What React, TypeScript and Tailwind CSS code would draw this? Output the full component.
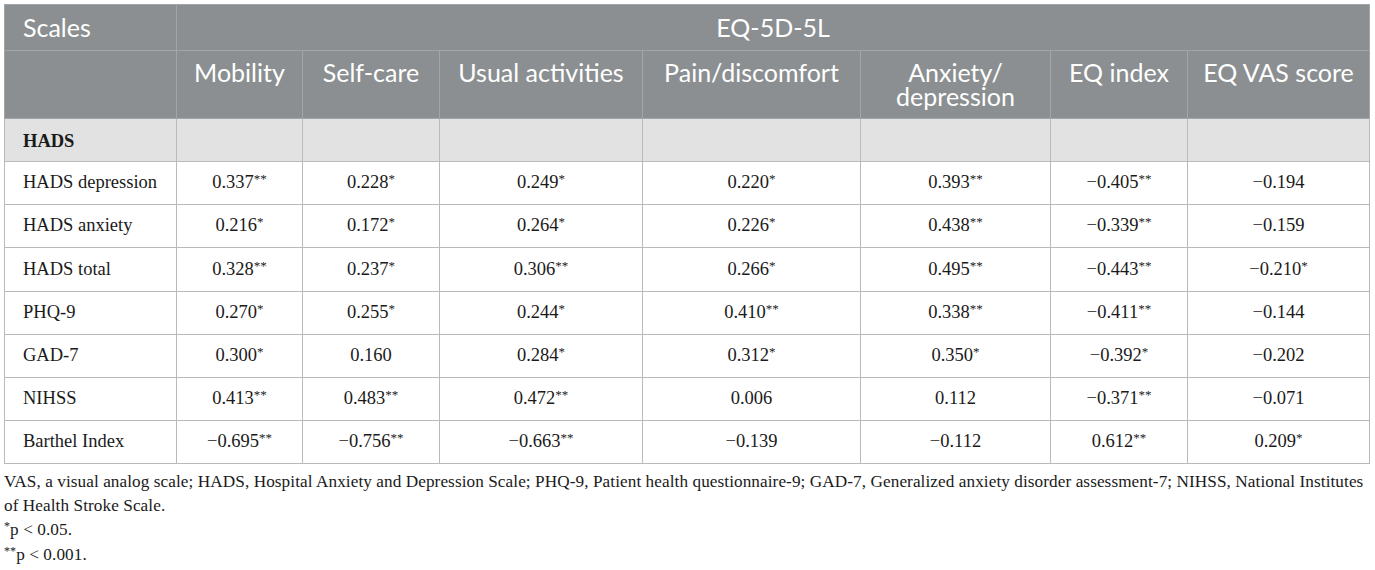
import React from 'react';

type Row = { label: string; values: string[] };

const rows: Row[] = [
  { label: 'HADS depression', values: ['0.337**', '0.228*', '0.249*', '0.220*', '0.393**', '−0.405**', '−0.194'] },
  { label: 'HADS anxiety', values: ['0.216*', '0.172*', '0.264*', '0.226*', '0.438**', '−0.339**', '−0.159'] },
  { label: 'HADS total', values: ['0.328**', '0.237*', '0.306**', '0.266*', '0.495**', '−0.443**', '−0.210*'] },
  { label: 'PHQ-9', values: ['0.270*', '0.255*', '0.244*', '0.410**', '0.338**', '−0.411**', '−0.144'] },
  { label: 'GAD-7', values: ['0.300*', '0.160', '0.284*', '0.312*', '0.350*', '−0.392*', '−0.202'] },
  { label: 'NIHSS', values: ['0.413**', '0.483**', '0.472**', '0.006', '0.112', '−0.371**', '−0.071'] },
  { label: 'Barthel Index', values: ['−0.695**', '−0.756**', '−0.663**', '−0.139', '−0.112', '0.612**', '0.209*'] },
];

const columns = ['Mobility', 'Self-care', 'Usual activities', 'Pain/discomfort', 'Anxiety/ depression', 'EQ index', 'EQ VAS score'];
const widths = [172, 126, 137, 203, 218, 190, 137, 182];

const sans = { fontFamily: 'Lato, "Liberation Sans", sans-serif' };
const serif = { fontFamily: '"Liberation Serif", serif' };

// split "0.337**" into number + raised stars
const Value: React.FC<{ v: string }> = ({ v }) => {
  const m = v.match(/^([^*]*)(\**)$/);
  const num = m ? m[1] : v;
  const stars = m ? m[2] : '';
  return (
    <>
      {num}
      {stars && <span className="relative -top-[5px] text-[13px]">{stars}</span>}
    </>
  );
};

const App: React.FC = () => {
  return (
    <div className="bg-white w-[1375px] h-[570px] pl-1 pt-1" style={serif}>
      <table className="border-collapse table-fixed w-[1366px] border border-[#b4b6b6]">
        <colgroup>
          {widths.map((w, i) => (
            <col key={i} style={{ width: w }} />
          ))}
        </colgroup>
        <thead style={sans} className="text-white text-[25px] font-normal">
          <tr className="h-[46px] bg-[#8b8f91]">
            <th className="text-left font-normal pl-[18px] border border-[#a3a6a7] align-middle">Scales</th>
            <th colSpan={7} className="font-normal border border-[#a3a6a7] align-middle">EQ-5D-5L</th>
          </tr>
          <tr className="h-[68px] bg-[#8b8f91]">
            <th className="border border-[#a3a6a7]"></th>
            {columns.map((c) => (
              <th key={c} className="font-normal border border-[#a3a6a7] align-top pt-[9px] leading-[24px] px-2">
                {c}
              </th>
            ))}
          </tr>
        </thead>
        <tbody className="text-[18.5px] text-[#1a1a1a]">
          <tr className="h-[43px] bg-[#e1e2e1]">
            <td className="font-bold pl-[18px] pt-[3px] border border-[#b9bbbb]">HADS</td>
            {columns.map((c) => (
              <td key={c} className="border border-[#b9bbbb]"></td>
            ))}
          </tr>
          {rows.map((r) => (
            <tr key={r.label} className="h-[43.2px]">
              <td className="pl-[18px] border border-[#b9bbbb]">{r.label}</td>
              {r.values.map((v, i) => (
                <td key={i} className="text-center border border-[#b9bbbb]">
                  <Value v={v} />
                </td>
              ))}
            </tr>
          ))}
        </tbody>
      </table>
      <div className="text-[17.2px] text-[#1a1a1a] w-[1368px] tracking-[0.08px] leading-[24px] mt-[6px]">
        <p>
          VAS, a visual analog scale; HADS, Hospital Anxiety and Depression Scale; PHQ-9, Patient health questionnaire-9; GAD-7, Generalized anxiety disorder assessment-7; NIHSS, National Institutes of Health Stroke Scale.
        </p>
        <p>
          <span className="relative -top-[5px] text-[12px]">*</span>p &lt; 0.05.
        </p>
        <p>
          <span className="relative -top-[5px] text-[12px]">**</span>p &lt; 0.001.
        </p>
      </div>
    </div>
  );
};

export default App;
